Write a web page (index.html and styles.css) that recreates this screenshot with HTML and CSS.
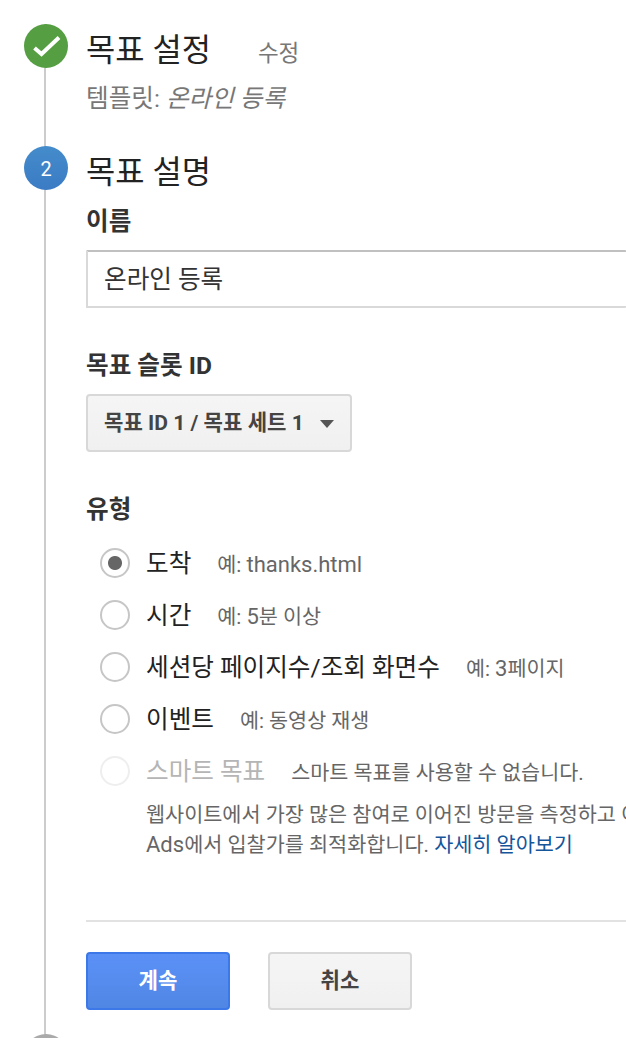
FILE: index.html
```html
<!DOCTYPE html>
<html lang="ko">
<head>
    <meta charset="UTF-8">
    <meta name="viewport" content="width=device-width, initial-scale=1.0">
    <title>목표 설정</title>
    <link rel="stylesheet" href="styles.css">
</head>
<body>
    <div class="steps">
        <section class="step step-done">
            <div class="rail">
                <div class="marker marker-done">
                    <svg viewBox="0 0 44 44" width="44" height="44">
                        <path d="M10.5 24 L17.5 30 L35 13.5" fill="none" stroke="#fff" stroke-width="4"/>
                    </svg>
                </div>
            </div>
            <div class="content">
                <div class="title-row">
                    <h2>목표 설정</h2>
                    <a class="edit">수정</a>
                </div>
                <p class="template">템플릿: <em>온라인 등록</em></p>
            </div>
        </section>

        <section class="step step-active">
            <div class="rail">
                <div class="marker marker-active">2</div>
            </div>
            <form class="content">
                <h2>목표 설명</h2>

                <label class="label label-name" for="name">이름</label>
                <input class="name-input" id="name" type="text" value="온라인 등록">

                <div class="label label-slot">목표 슬롯 ID</div>
                <button class="button dropdown" type="button">목표 ID 1 / 목표 세트 1<span class="arrow"></span></button>

                <div class="label label-type">유형</div>
                <div class="options">
                    <label class="option">
                        <span class="radio checked"></span>
                        <span class="option-name">도착</span>
                        <span class="hint">예: <span class="latin">thanks.html</span></span>
                    </label>
                    <label class="option">
                        <span class="radio"></span>
                        <span class="option-name">시간</span>
                        <span class="hint">예: <span class="latin">5</span>분 이상</span>
                    </label>
                    <label class="option">
                        <span class="radio"></span>
                        <span class="option-name">세션당 페이지수/조회 화면수</span>
                        <span class="hint">예: <span class="latin">3</span>페이지</span>
                    </label>
                    <label class="option">
                        <span class="radio"></span>
                        <span class="option-name">이벤트</span>
                        <span class="hint">예: 동영상 재생</span>
                    </label>
                    <label class="option disabled">
                        <span class="radio"></span>
                        <span class="option-name">스마트 목표</span>
                        <span class="hint">스마트 목표를 사용할 수 없습니다.</span>
                    </label>
                </div>
                <p class="description">웹사이트에서 가장 많은 참여로 이어진 방문을 측정하고 이를<br><span class="latin">Ads</span>에서 입찰가를 최적화합니다. <a class="link">자세히 알아보기</a></p>

                <div class="actions">
                    <button class="button primary" type="button">계속</button>
                    <button class="button" type="button">취소</button>
                </div>
            </form>
        </section>

        <section class="step">
            <div class="rail">
                <div class="marker marker-next"></div>
            </div>
        </section>
    </div>
</body>
</html>
```
FILE: styles.css
```css
* {
    box-sizing: border-box;
}

body {
    margin: 0;
    height: 1038px;
    overflow: hidden;
    background: #fff;
    color: #222;
    font-family: Roboto, "Noto Sans CJK KR", sans-serif;
    font-size: 24.6px;
    white-space: nowrap;
}

.steps {
    padding: 24px 0 0 24px;
}

.step {
    display: flex;
    gap: 18px;
}

.step-done {
    height: 122px;
}

.step-active {
    height: 888px;
}

/* vertical line that joins the markers */
.rail {
    flex: 0 0 44px;
    background: linear-gradient(#ccc, #ccc) 20px 0 / 2px 100% no-repeat;
}

.marker {
    width: 44px;
    height: 44px;
    border-radius: 50%;
    color: #fff;
    font-size: 20px;
    line-height: 46px;
    text-align: center;
}

.marker svg {
    display: block;
}

.marker-done {
    background: #559e41;
}

.marker-active {
    background: linear-gradient(#448ccb, #3b7bc4);
}

.marker-next {
    background: #aaa;
}

.content {
    flex: 1;
    min-width: 0;
}

.title-row {
    display: flex;
}

h2 {
    margin: 0;
    font-size: 31.8px;
    font-weight: 400;
    line-height: 52px;
}

.edit {
    margin-left: 47px;
    color: #777;
    font-size: 22.5px;
    line-height: 58px;
}

.template {
    margin: 0;
    color: #777;
    line-height: 34px;
}

.label {
    display: block;
    color: #333;
    font-weight: 700;
    line-height: 34px;
}

.label-name {
    margin-top: 7px;
}

.name-input {
    display: block;
    width: 100%;
    height: 58px;
    margin-top: 11px;
    padding: 0 16px 4px;
    border: 2px solid #d9d9d9;
    border-top-color: #c0c0c0;
    border-right: 0;
    border-radius: 1px;
    color: #333;
    font: inherit;
}

.label-slot,
.label-type {
    margin-top: 41px;
}

.button {
    width: 144px;
    height: 58px;
    padding: 0 0 4px;
    border: 2px solid #d8d8d8;
    border-radius: 4px;
    background: linear-gradient(#f5f5f5, #f0f0f0);
    color: #444;
    font: inherit;
    font-size: 21.1px;
    font-weight: 700;
}

.dropdown {
    display: flex;
    align-items: center;
    justify-content: space-between;
    width: 266px;
    margin-top: 11px;
    padding: 0 16px 4px;
}

.arrow {
    margin-top: 6px;
    border: 7px solid transparent;
    border-top: 8px solid #555;
    border-bottom: 0;
}

.options {
    margin: 10px 0 0 14px;
}

.option {
    display: flex;
    align-items: center;
    height: 52px;
}

.option-name {
    padding-bottom: 5px;
}

.radio {
    width: 30px;
    height: 30px;
    margin-right: 16px;
    border: 2px solid #c6c6c6;
    border-radius: 50%;
}

.radio.checked {
    background: radial-gradient(circle, #666 6.5px, transparent 7.5px);
}

.hint {
    margin-left: 26px;
    color: #666;
    font-size: 20.7px;
}

.latin {
    font-size: 22px;
}

.disabled .radio {
    border-color: #eee;
}

.disabled .option-name {
    color: #b5b5b5;
}

.description {
    margin: 3px 0 0 60px;
    color: #666;
    font-size: 20.75px;
    line-height: 30px;
}

.link {
    color: #15559a;
}

.actions {
    display: flex;
    gap: 38px;
    margin-top: 60px;
    padding-top: 30px;
    border-top: 2px solid #e2e2e2;
}

.primary {
    border-color: #3c78e7;
    background: linear-gradient(#5b91f7, #5087e4);
    color: #fff;
}
```
